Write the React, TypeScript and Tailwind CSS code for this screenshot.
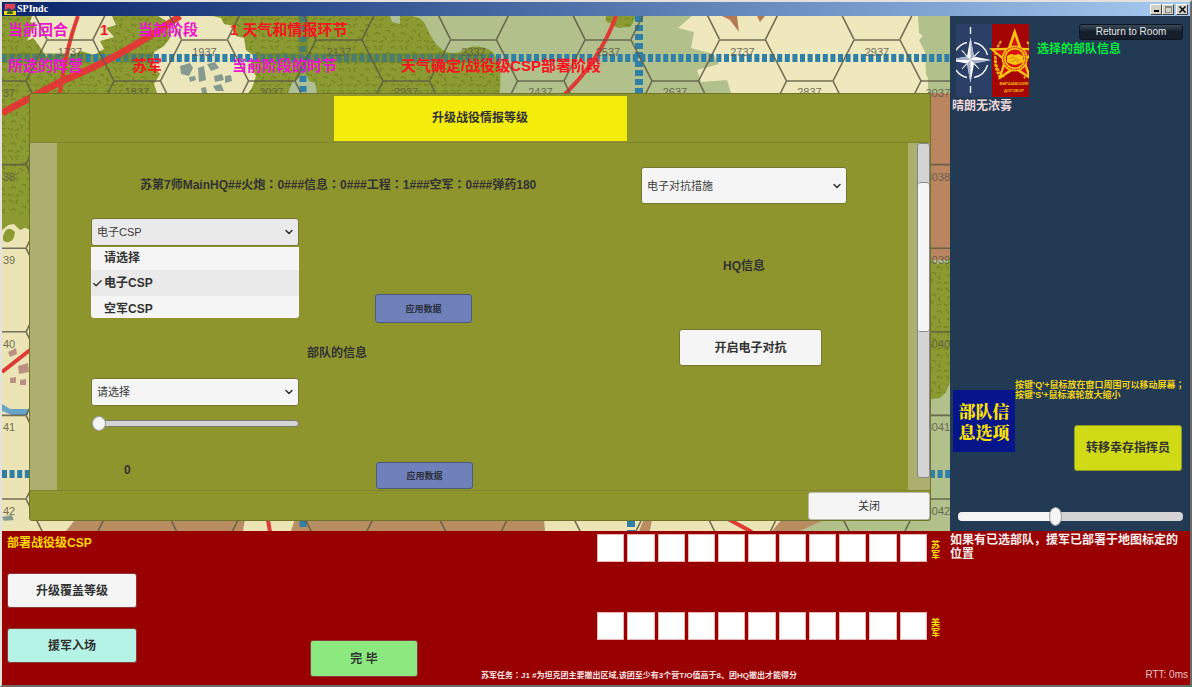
import { useState } from "react";
import type { CSSProperties, ReactNode } from "react";
import { Check, ChevronDown } from "lucide-react";

const SLOTS = Array.from({ length: 11 }, (_, i) => i);
const CSP_OPTIONS = ["请选择", "电子CSP", "空军CSP"];

// Full-width punctuation set in the middle of its cell.
function Zh({ children }: { children: string }) {
  return (
    <>
      {children.split(/([：；])/).map((part, i) =>
        i % 2 ? (
          <span key={i} lang="zh-TW" className="font-['Noto_Sans_CJK_TC',sans-serif]">
            {part}
          </span>
        ) : (
          part
        ),
      )}
    </>
  );
}

// Flat-top hex grid. Odd columns sit half a hex higher than even ones.
const COL = 134.5;
const ROW = 83.6;

function HexGrid() {
  const cells: ReactNode[] = [];
  for (let c = -1; c < 8; c++) {
    for (let r = -1; r < 7; r++) {
      const ax = 70 + COL * c;
      const ay = 81 + ROW * r;
      cells.push(
        <g key={`${c}-${r}`}>
          <path d={`M${ax - 23} ${ay - 41}H${ax + 23}L${ax + 44} ${ay}L${ax + 23} ${ay + 42}`} />
          <path d={`M${ax - 23} ${ay - 41}L${ax - 44} ${ay}L${ax - 23} ${ay + 42}`} />
          <path d={`M${ax + 44} ${ay}H${ax + 90}`} />
        </g>,
      );
    }
  }
  return (
    <g
      fill="none"
      stroke="#5d5b45"
      strokeWidth="1.6"
      opacity="0.85"
      className="[&_text]:fill-[#5d5b45] [&_text]:stroke-none"
      fontSize="11"
      textAnchor="middle"
    >
      {cells}
      {[0, 1, 2, 3, 4, 5, 6].map((c) => (
        <text key={c} x={70 + COL * c} y="56">{`${17 + c * 2}37`}</text>
      ))}
      {[0, 1, 2, 3, 4, 5].map((c) => (
        <text key={c} x={137 + COL * c} y="96">{`${18 + c * 2}37`}</text>
      ))}
      {[37, 38, 39, 40, 41, 42].map((n, r) => (
        <g key={n}>
          <text x="9" y={97 + ROW * r}>
            {n}
          </text>
          <text x="938" y={97 + ROW * r}>{`30${n}`}</text>
        </g>
      ))}
    </g>
  );
}

function HexMap() {
  return (
    <svg
      className="absolute inset-0 h-full w-full"
      viewBox="2 16 948 515"
      preserveAspectRatio="xMinYMin slice"
      aria-hidden="true"
    >
      <defs>
        <pattern id="woods" width="26" height="22" patternUnits="userSpaceOnUse">
          <rect width="26" height="22" fill="#8c9a32" />
          <path
            d="M1 4q3-3 5 1M9 2q4 0 3 4M17 6q-3-4 2-4M22 9q3-2 4 2M4 11q-3 3 1 4M11 12q3-3 5 1M19 15q4-1 3 3M8 18q3 3 5 0M1 20q2-3 4-1M15 20q3 1 4-2"
            fill="none"
            stroke="#73831f"
            strokeWidth="1.2"
          />
        </pattern>
      </defs>
      <rect x="2" y="16" width="948" height="515" fill="#b2c08c" />

      {/* woods and clearings, upper left */}
      <path d="M2 16H400q22-2 26 10q6 14 12 20q10 10 22 6q14-10 30-2q10 8 10 22q2 18-4 30H420V240H2Z" fill="url(#woods)" />
      <path d="M32 16l-2 6 7 3-6 6-4 10 6-3 5 6 8 12 14-2 9 3 12-6 13 4 10-6-4-8 14-4-8-9 10-3-4-9 6-7Z" fill="#ece6bb" />
      <path d="M158 16l10 6 2 16-6 8-10 6-2 12 8 10-6 10 4 12H246l6-8 4-12-6-10 4-10-8-6-2-12-8-2-2-10-10-2-3-6-8-2-2-8Z" fill="#ece6bb" />
      <path d="M288 93l4-10 6-4 6-10 5 12 6 2 2 10ZM390 16h10v8l-8-2Z" fill="#aebf98" />
      <path d="M180 66l10-3 3 5-4 8-8-2ZM198 68l6-2 2 14-7 2ZM207 64l8-2 4 6-8 3ZM214 76l8-2 2 6-9 2ZM225 76l6-1 1 6-7 2ZM189 77l6-1 1 4-6 2ZM213 86l8-2 3 7h-8ZM201 88l5-1 1 6h-5Z" fill="#869a90" />
      <path d="M606 16q-2 8 6 7q4 7 12 4q8 2 10-7l2-4Z" fill="url(#woods)" />
      <path d="M692 16l-14 12 16 4-3 16 22 6 6 10-22 6 4 12 26-2 4 13H928V40l-9-7-1-17Z" fill="#efe8bd" />
      <path d="M918 16l16 8-2 8-7 2-6 6 6 12 1 22 8 19h16V16Z" fill="#b2c08c" />
      <path d="M722 16l8 4 9 12-2-16ZM757 16l3 6 5-6Z" fill="#b67955" />

      {/* right edge */}
      <path d="M920 93h30V260h-30Z" fill="#bb8560" />
      <path d="M926 258l12 6 12-2v120l-4 10-6 6-14 2Z" fill="url(#woods)" />

      {/* left edge */}
      <path d="M2 230l10-8 18 8V531H2Z" fill="#ece4b4" />
      <path d="M2 214h27v12l-9 4-6-6-12 2ZM3 236q4-12 12-4q-1 8-4 9q-5 3-8-1Z" fill="#8c9a32" />
      <path d="M2 404l8 5h18v6H12l-10-4Z" fill="#66a5c8" />
      <path d="M8 352l8-4 1 6-7 3ZM18 366l10-3 1 9-10 2ZM10 378l6-1v6h-6ZM20 380l6-1v6h-6Z" fill="#bb9082" />
      <path d="M2 517l10-2 2 6-8 4ZM16 522l8-2v8h-8Z" fill="#869a90" />

      {/* strip under the dialog */}
      <path d="M28 519H950V531H2Z" fill="#b98d62" />
      <path d="M28 519l46 2-8 10H2v-10ZM245 519h50l-4 12h-48ZM544 519h100l-5 12h-94ZM652 519h130l-10 12H650Z" fill="#ece4b4" />
      <path d="M826 519h124v12H800Z" fill="#b2c08c" />

      <g fill="none" stroke="#2f80a8">
        <path d="M2 58H950" strokeWidth="8" strokeDasharray="5 2.6" />
        <path d="M303 16V93M303 521v10" strokeWidth="7" strokeDasharray="6 4" />
        <path d="M639 16V93M631 521v10" strokeWidth="8" strokeDasharray="6 3" />
        <path d="M2 474h28M930 474h20" strokeWidth="8" strokeDasharray="5 2.6" />
      </g>
      <path d="M2 53h84v10H2ZM120 53h34v10h-34ZM256 53h235v10H256ZM298 16h10v60h-10Z" fill="#6b7d28" opacity="0.45" />

      <g fill="none" stroke="#e03a35">
        <path d="M2 113L62 81Q120 58 180 16" strokeWidth="7" />
        <path d="M78 16Q66 48 60 93" strokeWidth="4" />
        <path d="M616 16Q600 60 565 94" strokeWidth="4" />
        <path d="M2 372l28-22M268 520l2 12M728 519l24 13" strokeWidth="4" />
      </g>
      <HexGrid />
    </svg>
  );
}

function AllianceEmblem() {
  return (
    <svg className="h-[73px] w-[73px] shrink-0" viewBox="0 0 73 73" role="img" aria-label="NATO / Варшавский договор">
      <rect width="37" height="73" fill="#2c3f66" />
      <rect x="36" width="37" height="73" fill="#a50505" />
      <g fill="none" stroke="#eef2f7" strokeWidth="1.4">
        <path d="M14.5 3v7M14.5 62v7" />
        <path d="M18 18.5A17.5 17.5 0 0 1 31.5 31M31.5 41A17.5 17.5 0 0 1 18 53.5M11 53.5A17.5 17.5 0 0 1 0 46M0 26.5A17.5 17.5 0 0 1 11 18.5" />
      </g>
      <path d="M14.5 13L18 32.5 35 36 18 39.5 14.5 59 11 39.5 0 37.500V34.5L11 32.5Z" fill="#fff" />
      <path d="M14.5 36L6 26.500 11 32.500ZM14.5 36L23 27.500 18 32.500ZM14.5 36L23 45 18 39.500ZM14.5 36L6 45 11 39.500Z" fill="#fff" stroke="#fff" />
      <path d="M14.5 13V36L18 32.5ZM35 36H14.5L18 39.5ZM14.5 59V36L11 39.5ZM0 36H14.5L11 32.5 0 34.5Z" fill="#a4b1c8" />
      <g fill="none" stroke="#f0ae10" strokeWidth="2.2" strokeDasharray="3 1">
        <path d="M45 17Q33 36 45 55M48 53Q39 45 40 34M71 18Q74 20 74 26M73 46Q72 50 68 54" />
      </g>
      <path
        d="M58.7 4L65.5 23.7 86 24.3 69.6 36.6 75.2 56 58.7 45.5 42.2 56 47.8 36.6 33 24.3 51.9 23.7Z"
        fill="#fbc50f"
      />
      <path
        d="M58.7 12L63.4 26 79 26.5 66.8 35.6 71.6 51 58.7 42 45.8 51 50.6 35.6 38.5 26.5 54 26Z"
        fill="#d81010"
      />
      <circle cx="58.7" cy="34.5" r="13" fill="#fbc50f" />
      <circle cx="58.7" cy="34.5" r="11" fill="none" stroke="#d81010" strokeWidth="1.2" strokeDasharray="1.5 1" />
      <circle cx="58.7" cy="34.5" r="9" fill="#d81010" />
      <path d="M51 32l4-2 4 1 4-1 4 2v6l-4 2-4 1-4-1-4-2Z" fill="#fbc50f" />
      <path d="M53 35l4-2 7 4M55 38l4-2 4 3" fill="none" stroke="#c87808" strokeWidth="0.8" />
      <g fill="#f5b90c" fontSize="4" fontWeight="700" textAnchor="middle">
        <text x="58" y="61">ВАРШАВСКИЙ</text>
        <text x="58" y="68">ДОГОВОР</text>
      </g>
    </svg>
  );
}

function TitleBar() {
  const button =
    "flex h-[11px] w-3 items-center justify-center border border-t-white border-l-white border-r-[#404040] border-b-[#404040] bg-[#d4d0c8]";
  return (
    <header className="flex h-[14px] items-center bg-linear-to-r from-[#0a246a] to-[#a6caf0] px-0.5">
      <svg className="mr-px h-3 w-3" viewBox="0 0 12 12" aria-hidden="true">
        <rect width="12" height="12" fill="#2c3f66" />
        <path d="M1 1h10v4l-3 2-3-2-4 2Z" fill="#e0405c" />
        <path d="M0 8h12v4H0Z" fill="#f3d60a" />
        <path d="M3 9l3-2 3 2v2H3Z" fill="#3a6a1c" />
      </svg>
      <h1 className="flex-1 font-['Liberation_Serif',serif] text-[10px] leading-3 font-bold text-white">SPIndc</h1>
      <button type="button" aria-label="最小化" className={button}>
        <span className="mt-1 h-0.5 w-[5px] bg-black" />
      </button>
      <button type="button" aria-label="最大化" className={button}>
        <span className="h-[7px] w-[7px] border border-t-2 border-[#8a8a84]" />
      </button>
      <button type="button" aria-label="关闭窗口" className={`ml-0.5 ${button}`}>
        <svg className="h-[7px] w-[7px]" viewBox="0 0 7 7" aria-hidden="true">
          <path d="M0.5 0.5l6 6M6.5 0.5l-6 6" stroke="#000" strokeWidth="1.5" />
        </svg>
      </button>
    </header>
  );
}

function Hud() {
  return (
    <dl className="relative flex h-[77px] flex-col gap-[18px] pt-[5px] pl-1.5 text-[15px] leading-[18px] font-bold whitespace-nowrap text-[#f81420] [&_dt]:text-[#ec14cc]">
      <div className="flex">
        <dt className="w-[92px]">当前回合</dt>
        <dd className="w-[38px]">1</dd>
        <dt className="w-[92px]">当前阶段</dt>
        <dd>1 天气和情报环节</dd>
      </div>
      <div className="flex">
        <dt className="w-[124px]">所选的阵营</dt>
        <dd className="w-[100px]">苏军</dd>
        <dt className="w-[169px]">当前阶段的时节</dt>
        <dd>天气确定/战役级CSP部署阶段</dd>
      </div>
    </dl>
  );
}

type DropdownProps = {
  label: string;
  options: string[];
  value: string;
  onChange: (v: string) => void;
  className: string;
};

function Dropdown({ label, options, value, onChange, className }: DropdownProps) {
  return (
    <div className="relative">
      <select
        aria-label={label}
        value={value}
        onChange={(e) => onChange(e.target.value)}
        className={`w-full appearance-none rounded-[3px] border border-[#74772f] px-[5px] text-[11px] font-normal text-[#3c3c3c] ${className}`}
      >
        {options.map((o) => (
          <option key={o}>{o}</option>
        ))}
      </select>
      <ChevronDown
        strokeWidth={3}
        className="pointer-events-none absolute inset-y-0 right-1 my-auto h-3 w-3 text-[#323232]"
      />
    </div>
  );
}

const applyButton = "rounded-[3px] border border-[#4f5a80] bg-[#6f80bb] text-[9px] font-bold text-[#2c2f3c]";
const sliderBase =
  "block appearance-none bg-transparent [&::-webkit-slider-thumb]:appearance-none [&::-webkit-slider-thumb]:rounded-[50%] [&::-webkit-slider-thumb]:border [&::-webkit-slider-thumb]:border-[#a0a0a0] [&::-webkit-slider-thumb]:bg-[#f5f5f5]";

function UpgradeDialog() {
  const [csp, setCsp] = useState("电子CSP");
  const [unit, setUnit] = useState("请选择");
  const [measure, setMeasure] = useState("电子对抗措施");
  const [amount, setAmount] = useState(0);

  return (
    <section
      role="dialog"
      aria-label="升级战役情报等级"
      className="relative mr-[19px] mb-2.5 ml-[27px] flex flex-1 flex-col rounded-[3px] border border-[#6f7428] bg-[#8f952d] text-xs font-bold text-[#323232]"
    >
      <div className="flex h-[49px] justify-center border-b border-[#7f8530] pt-0.5 pb-px">
        <h2 className="flex w-[293px] items-center justify-center bg-[#f4ec0a] pb-0.5">升级战役情报等级</h2>
      </div>

      <div className="flex flex-1">
        <div className="w-[27px] bg-[#adaf6f]" />
        <div className="flex flex-1 pl-[34px]">
          <div className="w-[550px] pt-[34px] leading-[14px]">
            <p className="pl-[49px] whitespace-nowrap">
              <Zh>苏第7师MainHQ##火炮：0###信息：0###工程：1###空军：0###弹药180</Zh>
            </p>
            <div className="relative mt-[26px] w-[208px]">
              <Dropdown label="CSP类型" options={CSP_OPTIONS} value={csp} onChange={setCsp} className="h-[28px] bg-[#eaeaea]" />
              <ul role="listbox" aria-label="CSP类型选项" className="absolute top-full left-0 mt-px w-full rounded-b-[3px] bg-[#f5f5f5]">
                {CSP_OPTIONS.map((o) => (
                  <li
                    key={o}
                    role="option"
                    aria-selected={o === csp}
                    onClick={() => setCsp(o)}
                    className="flex h-[26px] items-center pl-px first:h-[23px] first:pb-px last:h-[22px] last:pt-1 aria-selected:bg-[#eaeaea]"
                  >
                    <Check strokeWidth={3} className={`mr-px h-[11px] w-[11px] ${o === csp ? "" : "invisible"}`} />
                    {o}
                  </li>
                ))}
              </ul>
            </div>
            <button type="button" className={`mt-[48px] ml-[284px] block h-[29px] w-[97px] ${applyButton}`}>
              应用数据
            </button>
            <h3 className="mt-[23px] pl-[216px]">部队的信息</h3>
            <div className="mt-[18px] w-[208px]">
              <Dropdown label="部队" options={["请选择"]} value={unit} onChange={setUnit} className="h-[28px] bg-[#f5f5f5]" />
              <input
                type="range"
                aria-label="数量"
                min={0}
                max={10}
                value={amount}
                onChange={(e) => setAmount(Number(e.target.value))}
                className={`mt-2 h-[18px] w-full [&::-webkit-slider-runnable-track]:h-[7px] [&::-webkit-slider-runnable-track]:rounded-full [&::-webkit-slider-runnable-track]:border [&::-webkit-slider-runnable-track]:border-[#77786a] [&::-webkit-slider-runnable-track]:bg-[#d4d4d4] [&::-webkit-slider-thumb]:-mt-[5px] [&::-webkit-slider-thumb]:h-[15px] [&::-webkit-slider-thumb]:w-[14px] ${sliderBase}`}
              />
            </div>
            <div className="mt-[30px] flex justify-between pr-[168px] pl-[33px]">
              <output className="pt-px">{amount}</output>
              <button type="button" className={`h-[27px] w-[97px] ${applyButton}`}>
                应用数据
              </button>
            </div>
          </div>
          <div className="w-[206px] pt-6 leading-[14px]">
            <Dropdown
              label="电子对抗"
              options={["电子对抗措施"]}
              value={measure}
              onChange={setMeasure}
              className="h-[37px] bg-[#f5f5f5]"
            />
            <h3 className="mt-[55px] text-center">HQ信息</h3>
            <button
              type="button"
              className="mt-14 ml-[38px] block h-[37px] w-[143px] rounded-[3px] border border-[#74772f] bg-[#f5f5f5]"
            >
              开启电子对抗
            </button>
          </div>
        </div>
        <div className="flex w-[22px] justify-end bg-[#adaf6f] pb-3">
          <div className="flex w-[13px] flex-col rounded-[3px] border border-[#85868a] bg-[#d4d4d4] pt-[38px]">
            <div className="h-[150px] rounded-[3px] border-y border-[#85868a] bg-[#f5f5f5]" />
          </div>
        </div>
      </div>

      <div className="flex h-[30px] justify-end border-t border-[#7f8530] pt-px">
        <button type="button" className="w-[122px] rounded-[3px] border border-[#b9b9ae] bg-[#f5f5f5] text-[11px] font-normal">
          关闭
        </button>
      </div>
    </section>
  );
}

function Sidebar() {
  const [zoom, setZoom] = useState(43);
  return (
    <aside className="flex w-60 flex-col bg-[#223a54] font-bold">
      <div className="flex gap-2 pt-2 pr-[7px] pl-1.5">
        <AllianceEmblem />
        <div className="flex flex-1 flex-col">
          <button
            type="button"
            className="h-4 w-[104px] self-end rounded-[3px] border border-[#0d1620] bg-linear-to-b from-[#3a4a5a] to-[#141f2b] to-50% text-[10px] leading-[14px] font-normal text-[#e6e6e6]"
          >
            Return to Room
          </button>
          <h2 className="mt-0.5 text-xs leading-[14px] text-[#04ee3c]">选择的部队信息</h2>
        </div>
      </div>
      <p className="mt-0.5 pl-0.5 text-xs leading-[14px] text-[#ecd6d8]">晴朗无浓雾</p>

      <div className="mt-auto flex pr-2 pl-[3px]">
        <button
          type="button"
          className="mt-2.5 h-[62px] w-[62px] shrink-0 bg-[#06168a] px-1 font-['Noto_Serif_CJK_SC','Noto_Sans_CJK_SC',serif] text-[17px] leading-[21px] font-black text-[#ffe000]"
        >
          部队信息选项
        </button>
        <div className="flex min-w-0 flex-1 flex-col">
          <p className="text-[9px] leading-[10px] whitespace-nowrap text-[#f0d214]">
            <Zh>按键'Q'+鼠标放在窗口周围可以移动屏幕；</Zh>
            <br />
            按键'S'+鼠标滚轮放大缩小
          </p>
          <button
            type="button"
            className="mt-[25px] h-[46px] w-[108px] self-end rounded-[3px] border border-[#8f9a24] bg-[#d0db15] text-xs text-[#323232]"
          >
            转移幸存指挥员
          </button>
        </div>
      </div>
      <input
        type="range"
        aria-label="地图缩放"
        min={0}
        max={100}
        value={zoom}
        onChange={(e) => setZoom(Number(e.target.value))}
        style={{ "--fill": `${zoom}%` } as CSSProperties}
        className={`mt-[35px] mr-[7px] mb-[5px] ml-2 h-5 [&::-webkit-slider-runnable-track]:h-[9px] [&::-webkit-slider-runnable-track]:rounded-[4px] [&::-webkit-slider-runnable-track]:bg-[linear-gradient(to_right,#f5f5f5_var(--fill),#d4d4d4_var(--fill))] [&::-webkit-slider-thumb]:-mt-[5px] [&::-webkit-slider-thumb]:h-[19px] [&::-webkit-slider-thumb]:w-[13px] ${sliderBase}`}
      />
    </aside>
  );
}

function SlotTrack({ side }: { side: string }) {
  return (
    <div className="flex items-center gap-1">
      <div className="grid h-7 w-[330px] grid-cols-11 gap-[3px]">
        {SLOTS.map((i) => (
          <div key={i} className="border border-[#e8b4b4] bg-white" />
        ))}
      </div>
      <span className="w-[10px] pt-1 text-[9px] leading-[10px] font-bold text-[#f4e400]">{side}</span>
    </div>
  );
}

function CommandPanel() {
  const button = "rounded-[3px] border border-[#8a3a3a] text-xs font-bold text-[#323232]";
  return (
    <footer className="flex h-[154px] bg-[#990000]">
      <div className="flex w-[416px] justify-between pl-[5px]">
        <div className="flex flex-col">
          <h2 className="mt-[5px] text-xs leading-[14px] font-bold text-[#ffdc00]">部署战役级CSP</h2>
          <button type="button" className={`mt-[23px] h-[35px] w-[130px] bg-[#f5f5f5] ${button}`}>
            升级覆盖等级
          </button>
          <button type="button" className={`mt-5 h-[35px] w-[130px] bg-[#b5f3e6] ${button}`}>
            援军入场
          </button>
        </div>
        <button type="button" className={`mb-2 h-[37px] w-[108px] self-end bg-[#8be97f] ${button}`}>
          完 毕
        </button>
      </div>
      <div className="flex flex-1 flex-col pt-[3px]">
        <div className="flex flex-col items-end gap-[50px] pr-[9px]">
          <SlotTrack side="苏军" />
          <SlotTrack side="美军" />
        </div>
        <p className="mt-auto mb-[3px] pl-[63px] text-[8px] leading-3 font-bold whitespace-nowrap text-[#f6e4e4]">
          <Zh>苏军任务：J1 #为坦克团主要撤出区域,该团至少有3个营T/O值高于8、团HQ撤出才能得分</Zh>
        </p>
      </div>
      <div className="flex w-60 flex-col justify-between pt-0.5">
        <p className="pr-2 text-xs leading-[14px] font-bold text-[#fbeeee]">
          如果有已选部队，援军已部署于地图标定的位置
        </p>
        <p className="mb-1 pr-0.5 text-right text-[10px] leading-3 text-[#e6c4c4]">RTT: 0ms</p>
      </div>
    </footer>
  );
}

export default function App() {
  return (
    <div
      lang="zh-CN"
      className="flex min-h-screen flex-col border-2 border-t-[#e4e2dc] border-r-[#6a6a6a] border-b-[#6a6a6a] border-l-[#e4e2dc] font-['Liberation_Sans','Noto_Sans_CJK_SC',sans-serif]"
    >
      <TitleBar />
      <main className="flex flex-1">
        <div className="relative flex flex-1 flex-col overflow-hidden">
          <HexMap />
          <Hud />
          <UpgradeDialog />
        </div>
        <Sidebar />
      </main>
      <CommandPanel />
    </div>
  );
}
